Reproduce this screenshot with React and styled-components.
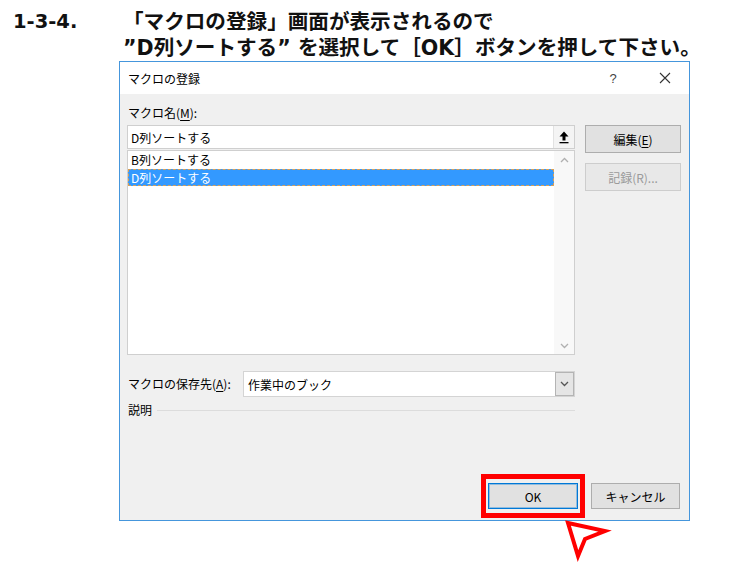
import React from "react";
import styled, { createGlobalStyle } from "styled-components";

const Global = createGlobalStyle`
  html, body { margin: 0; padding: 0; background: #fff; }
  * { box-sizing: border-box; }
`;

const Page = styled.div`
  width: 734px;
  height: 565px;
  overflow: hidden;
  background: #fff;
`;

const Header = styled.div`
  display: grid;
  grid-template-columns: 110px auto;
  padding: 9px 0 0 13px;
  font-family: "DejaVu Sans", "Noto Sans CJK JP", sans-serif;
  font-weight: bold;
  font-size: 20.6px;
  line-height: 26px;
  color: #111;
  white-space: nowrap;
`;

const StepNo = styled.div`
  font-size: 19.5px;
`;

const Lines = styled.div`
  display: flex;
  flex-direction: column;
`;

const Dialog = styled.div`
  margin-left: 119px;
  width: 571px;
  height: 460px;
  border: 1px solid #4596dc;
  display: flex;
  flex-direction: column;
  font-family: "Noto Sans CJK JP", "Noto Sans", sans-serif;
  font-size: 12px;
  color: #000;
`;

const TitleBar = styled.div`
  height: 32px;
  background: #fff;
  display: flex;
  align-items: center;
  padding-left: 8px;
`;

const Title = styled.div`
  flex: 1;
  font-size: 12px;
`;

const Help = styled.div`
  width: 14px;
  margin-right: 39px;
  font-family: "Liberation Sans", sans-serif;
  font-size: 13px;
  color: #444;
  text-align: center;
`;

const Close = styled.div`
  width: 12px;
  height: 12px;
  margin-right: 18px;
  display: flex;
`;

const Body = styled.div`
  flex: 1;
  background: #f0f0f0;
  display: flex;
  flex-direction: column;
  padding: 0 8px 11px 7px;
`;

const TopGrid = styled.div`
  display: grid;
  grid-template-columns: 448px 96px;
  column-gap: 10px;
`;

const LeftCol = styled.div`
  display: flex;
  flex-direction: column;
`;

const RightCol = styled.div`
  display: flex;
  flex-direction: column;
  gap: 10px;
  padding-top: 31px;
`;

const Label = styled.div`
  height: 16px;
  line-height: 16px;
  margin: ${(p) => p.$m || "0"};
  white-space: nowrap;
  width: ${(p) => p.$w || "auto"};
  flex-shrink: 0;
`;

const U = styled.span`
  text-decoration: underline;
  text-underline-offset: 2px;
`;

const Input = styled.div`
  height: 24px;
  background: #fff;
  border: 1px solid #cfcfcf;
  display: flex;
  align-items: center;
`;

const InputText = styled.div`
  flex: 1;
  padding-left: 3px;
`;

const RefBtn = styled.div`
  width: 21px;
  height: 22px;
  background: #f4f4f4;
  border-left: 1px solid #e2e2e2;
  display: flex;
  align-items: center;
  justify-content: center;
`;

const List = styled.div`
  margin-top: 1px;
  height: 205px;
  background: #fff;
  border: 1px solid #cfcfcf;
  display: flex;
`;

const Items = styled.div`
  flex: 1;
  display: flex;
  flex-direction: column;
`;

const Item = styled.div`
  height: 17.5px;
  line-height: 16px;
  padding-left: 2px;
  border: 1px ${(p) => (p.$sel ? "dashed #d8a058" : "solid transparent")};
  background: ${(p) => (p.$sel ? "#3399ff" : "transparent")};
  color: ${(p) => (p.$sel ? "#fff" : "#000")};
`;

const ScrollBar = styled.div`
  width: 20px;
  background: #f8f8f8;
  display: flex;
  flex-direction: column;
  justify-content: space-between;
  align-items: center;
  padding: 6px 0 5px;
`;

const Button = styled.div`
  width: ${(p) => p.$w || "96px"};
  height: ${(p) => p.$h || "28px"};
  background: ${(p) => (p.$disabled ? "#e8e8e8" : "#e1e1e1")};
  border: 1px solid ${(p) => (p.$default ? "#0078d7" : p.$disabled ? "#cdcdcd" : "#adadad")};
  box-shadow: ${(p) => (p.$default ? "inset 0 0 0 1px rgba(0,120,215,0.35)" : "none")};
  color: ${(p) => (p.$disabled ? "#9a9a9a" : "#000")};
  display: flex;
  align-items: center;
  justify-content: center;
  font-size: 12px;
  position: relative;
`;

const ComboRow = styled.div`
  margin-top: 16px;
  width: 448px;
  height: 26px;
  display: flex;
  align-items: center;
`;

const Combo = styled.div`
  flex: 1;
  height: 26px;
  background: #fff;
  border: 1px solid #d4d4d4;
  display: flex;
  align-items: center;
`;

const ComboText = styled.div`
  flex: 1;
  padding-left: 4px;
`;

const DropBtn = styled.div`
  width: 19px;
  height: 24px;
  background: #e5e5e5;
  border: 1px solid #b4b4b4;
  display: flex;
  align-items: center;
  justify-content: center;
`;

const DescRow = styled.div`
  margin-top: 5px;
  width: 448px;
  display: flex;
  align-items: center;
`;

const Rule = styled.div`
  flex: 1;
  height: 1px;
  background: #dcdcdc;
  margin-left: 5px;
`;

const Spacer = styled.div`
  flex: 1;
`;

const BottomRow = styled.div`
  display: flex;
  justify-content: flex-end;
  gap: 13px;
  padding-right: 1px;
`;

const Highlight = styled.div`
  position: absolute;
  left: -8px;
  right: -8px;
  top: -10px;
  bottom: -10px;
  border: 5px solid #ff0000;
  pointer-events: none;
`;

const Cursor = styled.svg`
  position: absolute;
  left: 72px;
  top: 33px;
  overflow: visible;
`;

const Chevron = ({ up, color = "#b0b0b0" }) => (
  <svg width="9" height="6" viewBox="0 0 9 6">
    <polyline
      points={up ? "1,5 4.5,1.5 8,5" : "1,1 4.5,4.5 8,1"}
      fill="none"
      stroke={color}
      strokeWidth="1.3"
    />
  </svg>
);

export default function App() {
  return (
    <Page>
      <Global />
      <Header>
        <StepNo>1-3-4.</StepNo>
        <Lines>
          <div>「マクロの登録」画面が表示されるので</div>
          <div>”D列ソートする” を選択して［OK］ボタンを押して下さい。</div>
        </Lines>
      </Header>
      <Dialog>
        <TitleBar>
          <Title>マクロの登録</Title>
          <Help>?</Help>
          <Close>
            <svg width="12" height="12" viewBox="0 0 12 12">
              <path d="M1 1 L11 11 M11 1 L1 11" stroke="#333" strokeWidth="1.1" />
            </svg>
          </Close>
        </TitleBar>
        <Body>
          <TopGrid>
            <LeftCol>
              <Label $m="11px 0 4px 1px">
                マクロ名(<U>M</U>):
              </Label>
              <Input>
                <InputText>D列ソートする</InputText>
                <RefBtn>
                  <svg width="10" height="13" viewBox="0 0 10 13">
                    <path d="M5 0.5 L9.5 5.5 L6.5 5.5 L6.5 9.5 L3.5 9.5 L3.5 5.5 L0.5 5.5 Z" fill="#000" />
                    <rect x="0.5" y="11" width="9" height="1.3" fill="#000" />
                  </svg>
                </RefBtn>
              </Input>
              <List>
                <Items>
                  <Item>B列ソートする</Item>
                  <Item $sel>D列ソートする</Item>
                </Items>
                <ScrollBar>
                  <Chevron up />
                  <Chevron />
                </ScrollBar>
              </List>
            </LeftCol>
            <RightCol>
              <Button>
                編集(<U>E</U>)
              </Button>
              <Button $disabled>記録(R)...</Button>
            </RightCol>
          </TopGrid>
          <ComboRow>
            <Label $w="115px" $m="0 0 0 1px">
              マクロの保存先(<U>A</U>):
            </Label>
            <Combo>
              <ComboText>作業中のブック</ComboText>
              <DropBtn>
                <Chevron color="#555" />
              </DropBtn>
            </Combo>
          </ComboRow>
          <DescRow>
            <Label $m="0 0 0 1px">説明</Label>
            <Rule />
          </DescRow>
          <Spacer />
          <BottomRow>
            <Button $w="90px" $h="26px" $default>
              OK
              <Highlight />
              <Cursor width="50" height="45" viewBox="0 0 50 45">
                <polygon
                  points="7,6 44,14 24,22 17,39"
                  fill="#fff"
                  stroke="#ff0000"
                  strokeWidth="4"
                  strokeLinejoin="miter"
                />
              </Cursor>
            </Button>
            <Button $w="89px" $h="26px">
              キャンセル
            </Button>
          </BottomRow>
        </Body>
      </Dialog>
    </Page>
  );
}
